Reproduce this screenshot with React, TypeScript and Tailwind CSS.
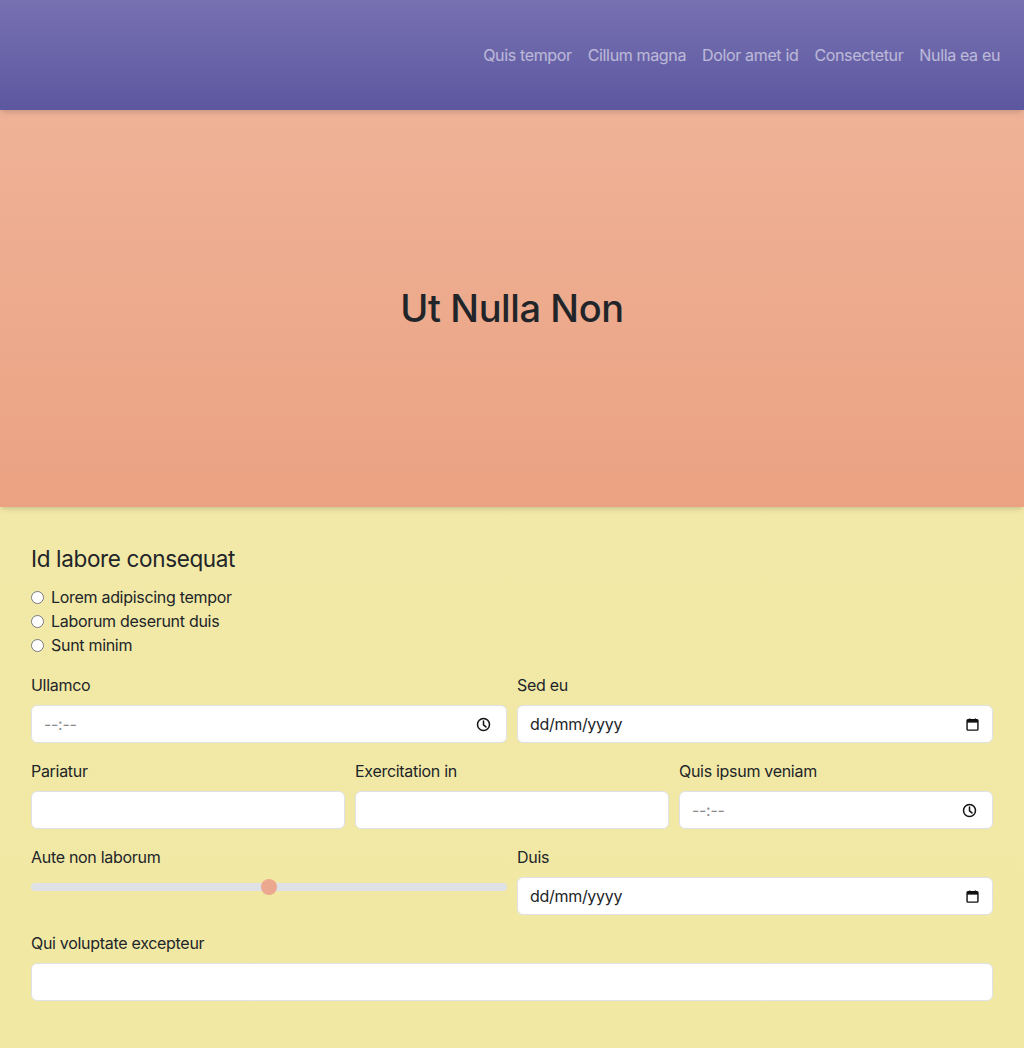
import React from "react";

const NAV = ["Quis tempor", "Cillum magna", "Dolor amet id", "Consectetur", "Nulla ea eu"];
const RADIOS = ["Lorem adipiscing tempor", "Laborum deserunt duis", "Sunt minim"];

function ClockIcon() {
  return (
    <svg className="w-[15px] h-[15px] mr-[3px]" viewBox="0 0 16 16" fill="none" stroke="#111" strokeWidth="1.6">
      <circle cx="8" cy="8" r="6.4" />
      <path d="M8 4.2V8.4l2.6 2.2" strokeLinecap="round" strokeLinejoin="round" />
    </svg>
  );
}

function CalendarIcon() {
  return (
    <svg className="w-[15px] h-[15px]" viewBox="0 0 16 16" fill="none">
      <rect x="2.2" y="3" width="11.6" height="11" rx="1" stroke="#111" strokeWidth="1.5" />
      <rect x="2.2" y="3" width="11.6" height="3" fill="#111" />
      <path d="M5 1.5v2.5M11 1.5v2.5" stroke="#111" strokeWidth="1.5" />
    </svg>
  );
}

function Label({ children }: { children: React.ReactNode }) {
  return <label className="block mb-2 leading-6 text-[#212529]">{children}</label>;
}

function Field({ label, placeholder, icon }: { label: string; placeholder?: string; icon?: "clock" | "cal" }) {
  return (
    <div>
      <Label>{label}</Label>
      <div className="flex items-center h-[38px] bg-white border border-[#dee2e6] rounded-md px-3">
        <input
          type="text"
          placeholder={placeholder}
          className={
            "flex-1 min-w-0 bg-transparent outline-none tracking-[-0.3px] " +
            (icon === "clock" ? "placeholder:text-[#8a8a8a]" : "placeholder:text-[#212529]")
          }
        />
        {icon === "clock" && <ClockIcon />}
        {icon === "cal" && <CalendarIcon />}
      </div>
    </div>
  );
}

export default function App() {
  return (
    <div className="font-['Inter','Liberation_Sans',sans-serif] text-[#212529] text-base tracking-[-0.3px] bg-[#f1e9a7] min-h-[1048px]">
      <header className="relative z-20 h-[110px] bg-gradient-to-b from-[#7771b2] to-[#5d57a0] shadow-md flex items-center justify-end pr-4">
        <nav className="flex">
          {NAV.map((n) => (
            <a key={n} href="#" className="px-2 text-white/55 leading-6 tracking-[-0.35px]">
              {n}
            </a>
          ))}
        </nav>
      </header>

      <section className="relative z-10 h-[397px] bg-gradient-to-b from-[#efb297] to-[#eba283] shadow-md flex items-center justify-center">
        <h1 className="text-[38px] font-medium tracking-[-0.4px] text-[#212529]">Ut Nulla Non</h1>
      </section>

      <section className="bg-gradient-to-b from-[#f2e9a8] to-[#f1e8a3] px-[31px] pt-[38px] pb-[47px]">
        <h2 className="text-[22.5px] leading-[28px] font-normal tracking-[-0.35px] mb-3">Id labore consequat</h2>
        <div className="mb-4">
          {RADIOS.map((r) => (
            <label key={r} className="flex items-center leading-6">
              <input type="radio" name="grp" className="w-[13px] h-[13px] ml-0 mr-[7px]" />
              {r}
            </label>
          ))}
        </div>

        <div className="grid grid-cols-2 gap-x-[10px] mb-4">
          <Field label="Ullamco" placeholder="--:--" icon="clock" />
          <Field label="Sed eu" placeholder="dd/mm/yyyy" icon="cal" />
        </div>

        <div className="grid grid-cols-3 gap-x-[10px] mb-4">
          <Field label="Pariatur" />
          <Field label="Exercitation in" />
          <Field label="Quis ipsum veniam" placeholder="--:--" icon="clock" />
        </div>

        <div className="grid grid-cols-2 gap-x-[10px] mb-4">
          <div>
            <Label>Aute non laborum</Label>
            <div className="relative h-2 mt-[14px] rounded-full bg-[#dee2e6]">
              <div className="absolute left-1/2 top-1/2 -translate-x-1/2 -translate-y-1/2 w-4 h-4 rounded-full bg-[#eca88e]" />
            </div>
          </div>
          <Field label="Duis" placeholder="dd/mm/yyyy" icon="cal" />
        </div>

        <Field label="Qui voluptate excepteur" />
      </section>
    </div>
  );
}
